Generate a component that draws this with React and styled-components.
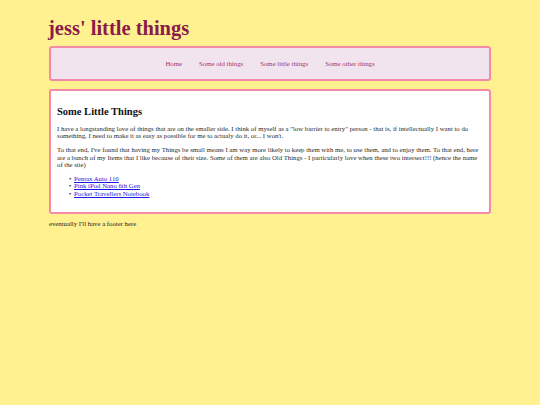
import React from "react";
import styled, { createGlobalStyle } from "styled-components";

const GlobalStyle = createGlobalStyle`
  html, body {
    margin: 0;
    padding: 0;
    background: #fff190;
  }
  body {
    font-family: "Liberation Serif", "Times New Roman", serif;
    font-size: 6.75px;
    color: #2a2a2a;
  }
`;

const links = ["Home", "Some old things", "Some little things", "Some other things"];
const items = ["Pentax Auto 110", "Pink iPod Nano 6th Gen", "Pocket Travellers Notebook"];

function App() {
  return (
    <>
      <GlobalStyle />
      <Page>
        <Title>jess' little things</Title>
        <Nav>
          {links.map((l) => (
            <NavLink key={l} href="#">
              {l}
            </NavLink>
          ))}
        </Nav>
        <Main>
          <Heading>Some Little Things</Heading>
          <p>
            I have a longstanding love of things that are on the smaller side. I think of myself as a
            "low barrier to entry" person - that is, if intellectually I want to do something, I need
            to make it as easy as possible for me to actualy do it, or... I won't.
          </p>
          <p>
            To that end, I've found that having my Things be small means I am way more likely to keep
            them with me, to use them, and to enjoy them. To that end, here are a bunch of my Items that
            I like because of their size. Some of them are also Old Things - I particularly love when
            these two intersect!!! (hence the name of the site)
          </p>
          <List>
            {items.map((i) => (
              <li key={i}>
                <a href="#">{i}</a>
              </li>
            ))}
          </List>
        </Main>
        <Footer>eventually I'll have a footer here</Footer>
      </Page>
    </>
  );
}

const Page = styled.div`
  width: 442px;
  margin: 0 auto;
  padding-top: 17px;
`;

const Title = styled.h1`
  margin: 0 0 7px -1px;
  font-family: "Liberation Serif", "Times New Roman", serif;
  font-size: 20.5px;
  font-weight: 700;
  line-height: 22px;
  color: #8b1a4b;
`;

const Nav = styled.nav`
  display: flex;
  justify-content: center;
  gap: 17px;
  height: 31px;
  align-items: center;
  background: #f1e4ef;
  border: 2px solid #f48aa8;
  border-radius: 3px;
  margin-bottom: 8px;
`;

const NavLink = styled.a`
  font-family: "Liberation Serif", "Times New Roman", serif;
  font-size: 6.8px;
  color: #a0336b;
  text-decoration: none;
`;

const Main = styled.main`
  background: #fff;
  border: 2px solid #f48aa8;
  border-radius: 3px;
  padding: 6px 6px 8px;
  line-height: 7.4px;

  p {
    margin: 6.5px 0;
  }
`;

const Heading = styled.h2`
  margin: 9px 0 7px;
  font-size: 10.5px;
  font-weight: 700;
  line-height: 12px;
  color: #111;
`;

const List = styled.ul`
  margin: 6.5px 0;
  padding-left: 17px;
  list-style: none;

  li::before {
    content: "•";
    display: inline-block;
    width: 5px;
    margin-left: -5px;
    color: #222;
  }

  a {
    color: #1a1ae0;
  }
`;

const Footer = styled.footer`
  margin-top: 6px;
  color: #222;
`;

export default App;
